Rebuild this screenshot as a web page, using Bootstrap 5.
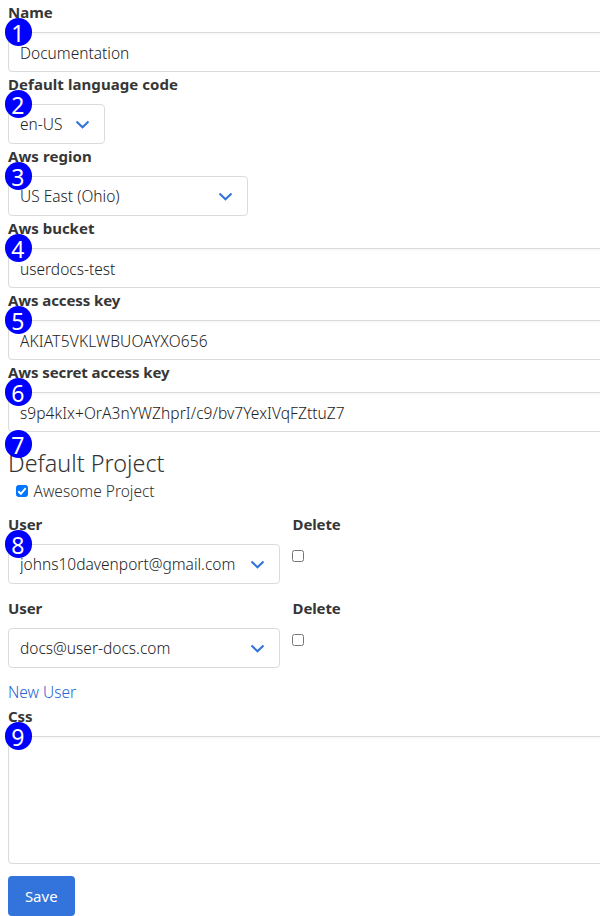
<!DOCTYPE html>
<html lang="en">
<head>
<meta charset="utf-8">
<meta name="viewport" content="width=device-width, initial-scale=1">
<title>Team settings</title>
<link href="https://cdn.jsdelivr.net/npm/bootstrap@5.3.0/dist/css/bootstrap.min.css" rel="stylesheet">
<style>
body{font:350 15.5px/24px "Noto Sans","Open Sans",sans-serif;color:#333;overflow:hidden}
.team-form{width:618px;padding-left:8px;padding-right:8px}
.form-label{display:block;height:24px;margin-bottom:8px;font-size:15px;font-weight:700;color:#363636}
.form-control,.form-select{height:40px;padding:7px 11px;font-size:15.5px;font-weight:350;line-height:24px;color:#222;border-color:#dbdbdb;border-radius:4px}
.form-control{padding:9px 11px 7px;box-shadow:inset 0 1px 2px rgba(10,10,10,.05)}
.form-select{padding-right:30px;background-size:15px 9px;background-position:right 14.5px top 15px;
background-image:url("data:image/svg+xml,%3Csvg xmlns='http://www.w3.org/2000/svg' viewBox='0 0 15 9'%3E%3Cpath d='M1.5 1.5l6 5.7 6-5.7' fill='none' stroke='%233273dc' stroke-width='2.1'/%3E%3C/svg%3E")}
.lang-label{letter-spacing:.07px}
.pick-lang{width:97px}
.pick-region{width:240px}
.pick-user{width:272px}
.key-text{letter-spacing:.16px}
.secret-text{letter-spacing:.06px}
.tight{letter-spacing:-.1px}
.marked{position:relative}
.marker{position:absolute;z-index:2;left:-3.3px;top:-13.6px;width:27.4px;height:27.4px;border-radius:50%;background:#00f;color:#fff;font-size:23px;font-weight:400;line-height:30px;text-align:center;text-indent:-1px}
.marker-heading{top:-5.6px}
.project-title{font-size:23.4px;line-height:38px;height:36px;font-weight:350}
.project-check{height:24px;padding-left:8px}
.form-check-input.tick{width:12px;height:12px;margin:0;border:1px solid #767676;border-radius:2.5px}
.project-check .form-check-input.tick{margin-top:-3px}
.project-check label{padding-left:5.5px;margin-top:-2px}
.form-check-input.tick:checked{background-color:#0075ff;border-color:#0075ff;
background-size:12px 12px;background-image:url("data:image/svg+xml,%3Csvg xmlns='http://www.w3.org/2000/svg' viewBox='0 0 12 12'%3E%3Cpath d='M2.3 6.2l2.6 2.6 4.8-5.6' fill='none' stroke='%23fff' stroke-width='2'/%3E%3C/svg%3E")}
.user-row{height:72px;margin-bottom:12px}
.delete-col{padding-left:12.5px}
.delete-col .form-check-input.tick{margin:13.5px 0 0 -.5px}
.new-user{color:#2464d4}
.css-area.form-control{height:128px;width:602px;resize:both}
.btn-save{height:40px;width:66.5px;margin-top:12px;padding:7px 0;font-size:15px;font-weight:400;line-height:24px;background:#3273dc;color:#fff;border-radius:4px}
</style>
</head>
<body>
<form class="team-form">
  <div><label class="form-label" for="name">Name</label>
    <div class="marked"><span class="marker">1</span><input id="name" class="form-control" value="Documentation"></div></div>
  <div><label class="form-label lang-label" for="lang">Default language code</label>
    <div class="marked"><span class="marker">2</span><select id="lang" class="form-select pick-lang"><option>en-US</option></select></div></div>
  <div><label class="form-label lang-label" for="region">Aws region</label>
    <div class="marked"><span class="marker">3</span><select id="region" class="form-select pick-region"><option>US East (Ohio)</option></select></div></div>
  <div><label class="form-label" for="bucket">Aws bucket</label>
    <div class="marked"><span class="marker">4</span><input id="bucket" class="form-control" value="userdocs-test"></div></div>
  <div><label class="form-label tight" for="access">Aws access key</label>
    <div class="marked"><span class="marker">5</span><input id="access" class="form-control key-text" value="AKIAT5VKLWBUOAYXO656"></div></div>
  <div><label class="form-label tight" for="secret">Aws secret access key</label>
    <div class="marked"><span class="marker">6</span><input id="secret" class="form-control secret-text" value="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"></div></div>
  <div class="marked pt-2 mt-1"><span class="marker marker-heading">7</span>
    <h2 class="project-title mb-0">Default Project</h2></div>
  <div class="project-check d-flex align-items-center mb-2">
    <input id="project" class="form-check-input tick" type="checkbox" checked><label for="project">Awesome Project</label></div>
  <div class="user-row d-flex">
    <div><label class="form-label tight" for="user1">User</label>
      <div class="marked"><span class="marker">8</span><select id="user1" class="form-select pick-user"><option>johns10davenport@gmail.com</option></select></div></div>
    <div class="delete-col"><label class="form-label tight" for="del1">Delete</label><input id="del1" class="form-check-input tick d-block" type="checkbox"></div>
  </div>
  <div class="user-row d-flex">
    <div><label class="form-label tight" for="user2">User</label>
      <select id="user2" class="form-select pick-user"><option>docs@user-docs.com</option></select></div>
    <div class="delete-col"><label class="form-label tight" for="del2">Delete</label><input id="del2" class="form-check-input tick d-block" type="checkbox"></div>
  </div>
  <a class="new-user d-block text-decoration-none" href="#">New User</a>
  <div><label class="form-label tight" for="css">Css</label>
    <div class="marked"><span class="marker">9</span><textarea id="css" class="form-control css-area"></textarea></div></div>
  <button type="button" class="btn btn-save">Save</button>
</form>
</body>
</html>
